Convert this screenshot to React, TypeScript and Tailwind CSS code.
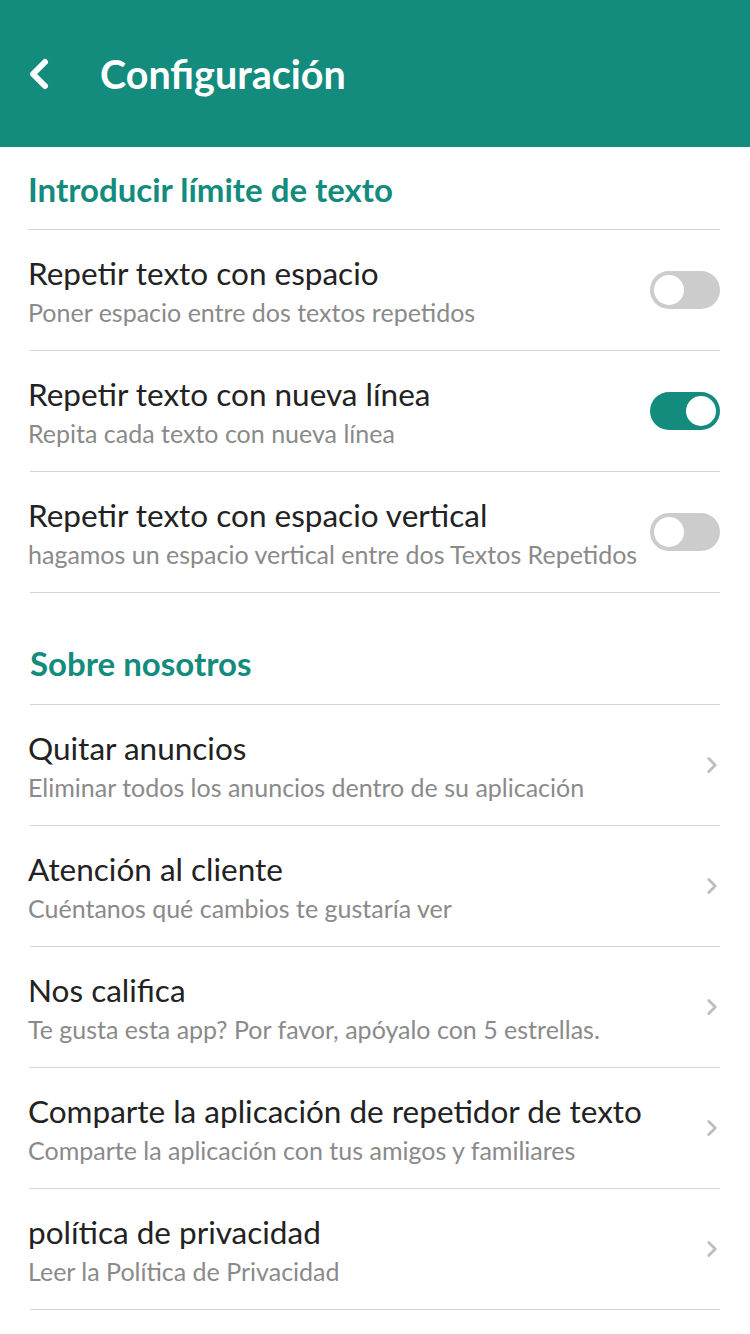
import { ChevronLeft, ChevronRight } from 'lucide-react';

const toggles = [
    { title: 'Repetir texto con espacio', sub: 'Poner espacio entre dos textos repetidos', on: false },
    { title: 'Repetir texto con nueva línea', sub: 'Repita cada texto con nueva línea', on: true },
    { title: 'Repetir texto con espacio vertical', sub: 'hagamos un espacio vertical entre dos Textos Repetidos', on: false },
];

const links = [
    { title: 'Quitar anuncios', sub: 'Eliminar todos los anuncios dentro de su aplicación' },
    { title: 'Atención al cliente', sub: 'Cuéntanos qué cambios te gustaría ver' },
    { title: 'Nos califica', sub: 'Te gusta esta app? Por favor, apóyalo con 5 estrellas.' },
    { title: 'Comparte la aplicación de repetidor de texto', sub: 'Comparte la aplicación con tus amigos y familiares' },
    { title: 'política de privacidad', sub: 'Leer la Política de Privacidad' },
];

function Toggle({ on }: { on: boolean }) {
    return (
        <div className={`w-[70px] h-[38px] shrink-0 rounded-full flex items-center px-[4px] ${on ? 'bg-[#138b7d] justify-end' : 'bg-[#cccccc] justify-start'}`}>
            <div className="w-[30px] h-[30px] rounded-full bg-white" />
        </div>
    );
}

export default function App() {
    return (
        <div className="w-[750px] min-h-[1334px] bg-white" style={{ fontFamily: 'Lato, "Noto Sans", sans-serif' }}>
            {/* Header */}
            <div className="h-[147px] bg-[#138b7d] flex items-center px-[15px] text-white">
                <ChevronLeft size={48} strokeWidth={3} />
                <h1 className="ml-[37px] text-[39.5px] font-bold">Configuración</h1>
            </div>

            <div className="px-[30px]">
                {/* Section 1 */}
                <h2 className="h-[83px] flex items-center pt-[4px] -ml-[2px] text-[33px] font-bold text-[#138b7d] border-b border-[#d4d4d4]">
                    Introducir límite de texto
                </h2>
                {toggles.map((t) => (
                    <div key={t.title} className="h-[121px] flex items-center justify-between border-b border-[#d4d4d4]">
                        <div className="-ml-[2px] whitespace-nowrap">
                            <p className="text-[31.5px] leading-[38px] text-[#222222]">{t.title}</p>
                            <p className="text-[25px] leading-[30px] mt-[5px] text-[#8a8a8a]">{t.sub}</p>
                        </div>
                        <Toggle on={t.on} />
                    </div>
                ))}

                {/* Section 2 */}
                <h2 className="h-[112px] flex items-center pt-[30px] text-[33px] font-bold text-[#138b7d] border-b border-[#d4d4d4]">
                    Sobre nosotros
                </h2>
                {links.map((l) => (
                    <div key={l.title} className="h-[121px] flex items-center justify-between border-b border-[#d4d4d4]">
                        <div className="-ml-[2px] whitespace-nowrap">
                            <p className="text-[31.5px] leading-[38px] text-[#222222]">{l.title}</p>
                            <p className="text-[25px] leading-[30px] mt-[5px] text-[#8a8a8a]">{l.sub}</p>
                        </div>
                        <ChevronRight size={26} strokeWidth={2.6} className="text-[#bdbdbd] -mr-[5px]" />
                    </div>
                ))}
            </div>
        </div>
    );
}
